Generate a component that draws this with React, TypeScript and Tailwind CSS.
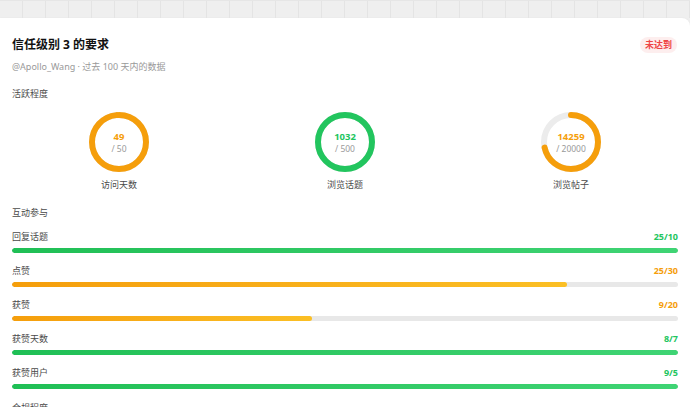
import React from "react";

type Ring = { value: number; max: number; label: string; color: string };
type Bar = { label: string; value: number; max: number; color: "green" | "orange" };

const rings: Ring[] = [
  { value: 49, max: 50, label: "访问天数", color: "#f59e0b" },
  { value: 1032, max: 500, label: "浏览话题", color: "#22c55e" },
  { value: 14259, max: 20000, label: "浏览帖子", color: "#f59e0b" },
];

const bars: Bar[] = [
  { label: "回复话题", value: 25, max: 10, color: "green" },
  { label: "点赞", value: 25, max: 30, color: "orange" },
  { label: "获赞", value: 9, max: 20, color: "orange" },
  { label: "获赞天数", value: 8, max: 7, color: "green" },
  { label: "获赞用户", value: 9, max: 5, color: "green" },
];

function RingChart({ ring }: { ring: Ring }) {
  const r = 27;
  const c = 2 * Math.PI * r;
  const pct = Math.min(ring.value / ring.max, 1);
  return (
    <div className="flex flex-col items-center">
      <div className="relative w-[60px] h-[60px]">
        <svg width="60" height="60" viewBox="0 0 60 60" className="-rotate-90">
          <circle cx="30" cy="30" r={r} fill="none" stroke="#ececec" strokeWidth="6" />
          <circle
            cx="30"
            cy="30"
            r={r}
            fill="none"
            stroke={ring.color}
            strokeWidth="6"
            strokeLinecap="round"
            strokeDasharray={`${c * pct} ${c}`}
          />
        </svg>
        <div className="absolute inset-0 flex flex-col items-center justify-center pt-px">
          <div className="text-[9.5px] font-bold leading-[12px]" style={{ color: ring.color }}>
            {ring.value}
          </div>
          <div className="text-[8.5px] leading-[11px] text-[#9a9a9a]">/ {ring.max}</div>
        </div>
      </div>
      <div className="mt-[5px] text-[9px] leading-4 text-[#4a4a4a]">{ring.label}</div>
    </div>
  );
}

function ProgressRow({ bar }: { bar: Bar }) {
  const pct = Math.min(bar.value / bar.max, 1) * 100;
  const fill =
    bar.color === "green"
      ? "bg-gradient-to-r from-[#1fbf55] to-[#3fd474]"
      : "bg-gradient-to-r from-[#f59e0b] to-[#fbbf24]";
  const text = bar.color === "green" ? "text-[#22c55e]" : "text-[#f59e0b]";
  return (
    <div>
      <div className="flex items-center justify-between h-4">
        <span className="text-[9px] text-[#4a4a4a]">{bar.label}</span>
        <span className={`text-[9px] font-bold ${text}`}>
          {bar.value}/{bar.max}
        </span>
      </div>
      <div className="mt-[3px] h-[5px] rounded-full bg-[#e8e8e8] overflow-hidden">
        <div className={`h-full rounded-full ${fill}`} style={{ width: `${pct}%` }} />
      </div>
    </div>
  );
}

export default function App() {
  return (
    <div
      className="w-[690px] h-[407px] overflow-hidden bg-[#efefef]"
      style={{ fontFamily: '"Noto Sans", "Noto Sans CJK SC", sans-serif' }}
    >
      {/* faint tiled strip above the card */}
      <div className="flex h-[18px] border-t border-[#e6e6e6]">
        {Array.from({ length: 31 }).map((_, i) => (
          <div key={i} className="w-[23px] shrink-0 border-r border-[#e4e4e4]" />
        ))}
      </div>

      <div className="bg-white rounded-tr-[8px] shadow-[0_0_2px_rgba(0,0,0,0.06)] px-3 pt-[17px] h-[389px]">
        <div className="flex items-center justify-between h-5">
          <h2 className="text-[12px] font-bold text-[#111]">信任级别 3 的要求</h2>
          <span className="mr-[1px] rounded-full bg-[#fdeeee] px-[5px] h-[16px] flex items-center text-[9px] font-semibold text-[#ef4444]">
            未达到
          </span>
        </div>
        <div className="mt-[4px] text-[9px] leading-4 text-[#999]">
          @Apollo_Wang · 过去 100 天内的数据
        </div>

        <div className="mt-[11px] text-[9px] leading-4 text-[#4a4a4a]">活跃程度</div>
        <div className="mt-[10px] grid grid-cols-3 gap-3">
          {rings.map((r) => (
            <RingChart key={r.label} ring={r} />
          ))}
        </div>

        <div className="mt-3 text-[9px] leading-4 text-[#4a4a4a]">互动参与</div>
        <div className="mt-2 flex flex-col gap-[10px]">
          {bars.map((b) => (
            <ProgressRow key={b.label} bar={b} />
          ))}
        </div>

        <div className="mt-[11px] text-[9px] leading-4 text-[#4a4a4a]">合规程度</div>
      </div>
    </div>
  );
}
